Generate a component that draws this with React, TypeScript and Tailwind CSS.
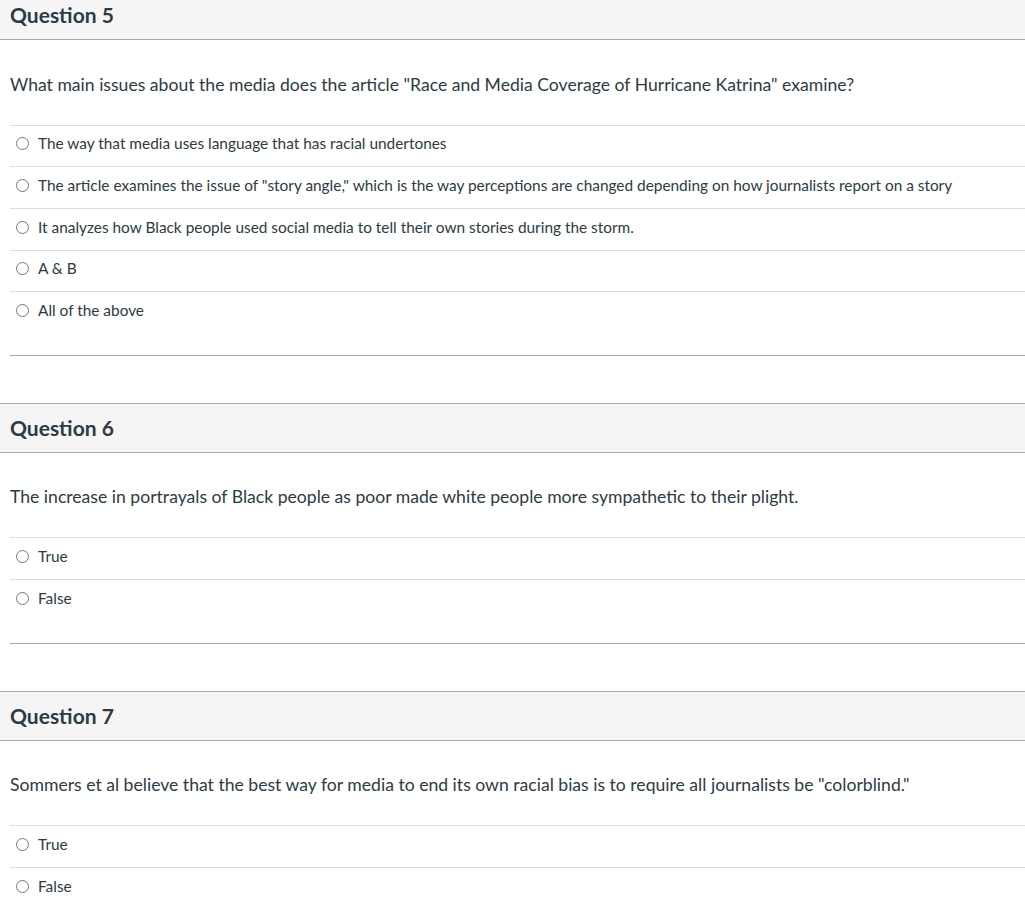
import React from 'react'

interface Question {
  title: string
  text: string
  answers: string[]
}

const questions: Question[] = [
  {
    title: 'Question 5',
    text: 'What main issues about the media does the article "Race and Media Coverage of Hurricane Katrina" examine?',
    answers: [
      'The way that media uses language that has racial undertones',
      'The article examines the issue of "story angle," which is the way perceptions are changed depending on how journalists report on a story',
      'It analyzes how Black people used social media to tell their own stories during the storm.',
      'A & B',
      'All of the above',
    ],
  },
  {
    title: 'Question 6',
    text: 'The increase in portrayals of Black people as poor made white people more sympathetic to their plight.',
    answers: ['True', 'False'],
  },
  {
    title: 'Question 7',
    text: 'Sommers et al believe that the best way for media to end its own racial bias is to require all journalists be "colorblind."',
    answers: ['True', 'False'],
  },
]

const QuestionBlock = ({ q, first }: { q: Question; first: boolean }) => (
  <div className={first ? '-mt-[10px]' : 'mt-[47px]'}>
    {/* header */}
    <div className="h-[50px] flex items-center px-[10px] bg-[#f5f5f5] border-y border-[#a9a9a9]">
      <h2 className="text-[21px] font-bold text-[#2d3b45]">{q.title}</h2>
    </div>

    {/* question text */}
    <div className="px-[10px] pt-[31.5px] pb-[28px] text-[17.6px] leading-[25px] text-[#2d3b45]">
      {q.text}
    </div>

    {/* answers */}
    <div className="ml-[10px] pb-[22px] border-b border-[#a9a9a9]">
      {q.answers.map(a => (
        <div key={a} className="h-[41.7px] flex items-center border-t border-[#dddddd] pl-[6px] pb-[4px]">
          <span className="w-[13px] h-[13px] rounded-full border border-[#777777] bg-white flex-shrink-0" />
          <span className="ml-[9px] text-[15.4px] text-[#2d3b45]">{a}</span>
        </div>
      ))}
    </div>
  </div>
)

export default function App() {
  return (
    <div className="w-[1025px] h-[910px] overflow-hidden bg-white" style={{ fontFamily: 'Lato, "Liberation Sans", sans-serif' }}>
      {questions.map((q, i) => (
        <QuestionBlock key={q.title} q={q} first={i === 0} />
      ))}
    </div>
  )
}
